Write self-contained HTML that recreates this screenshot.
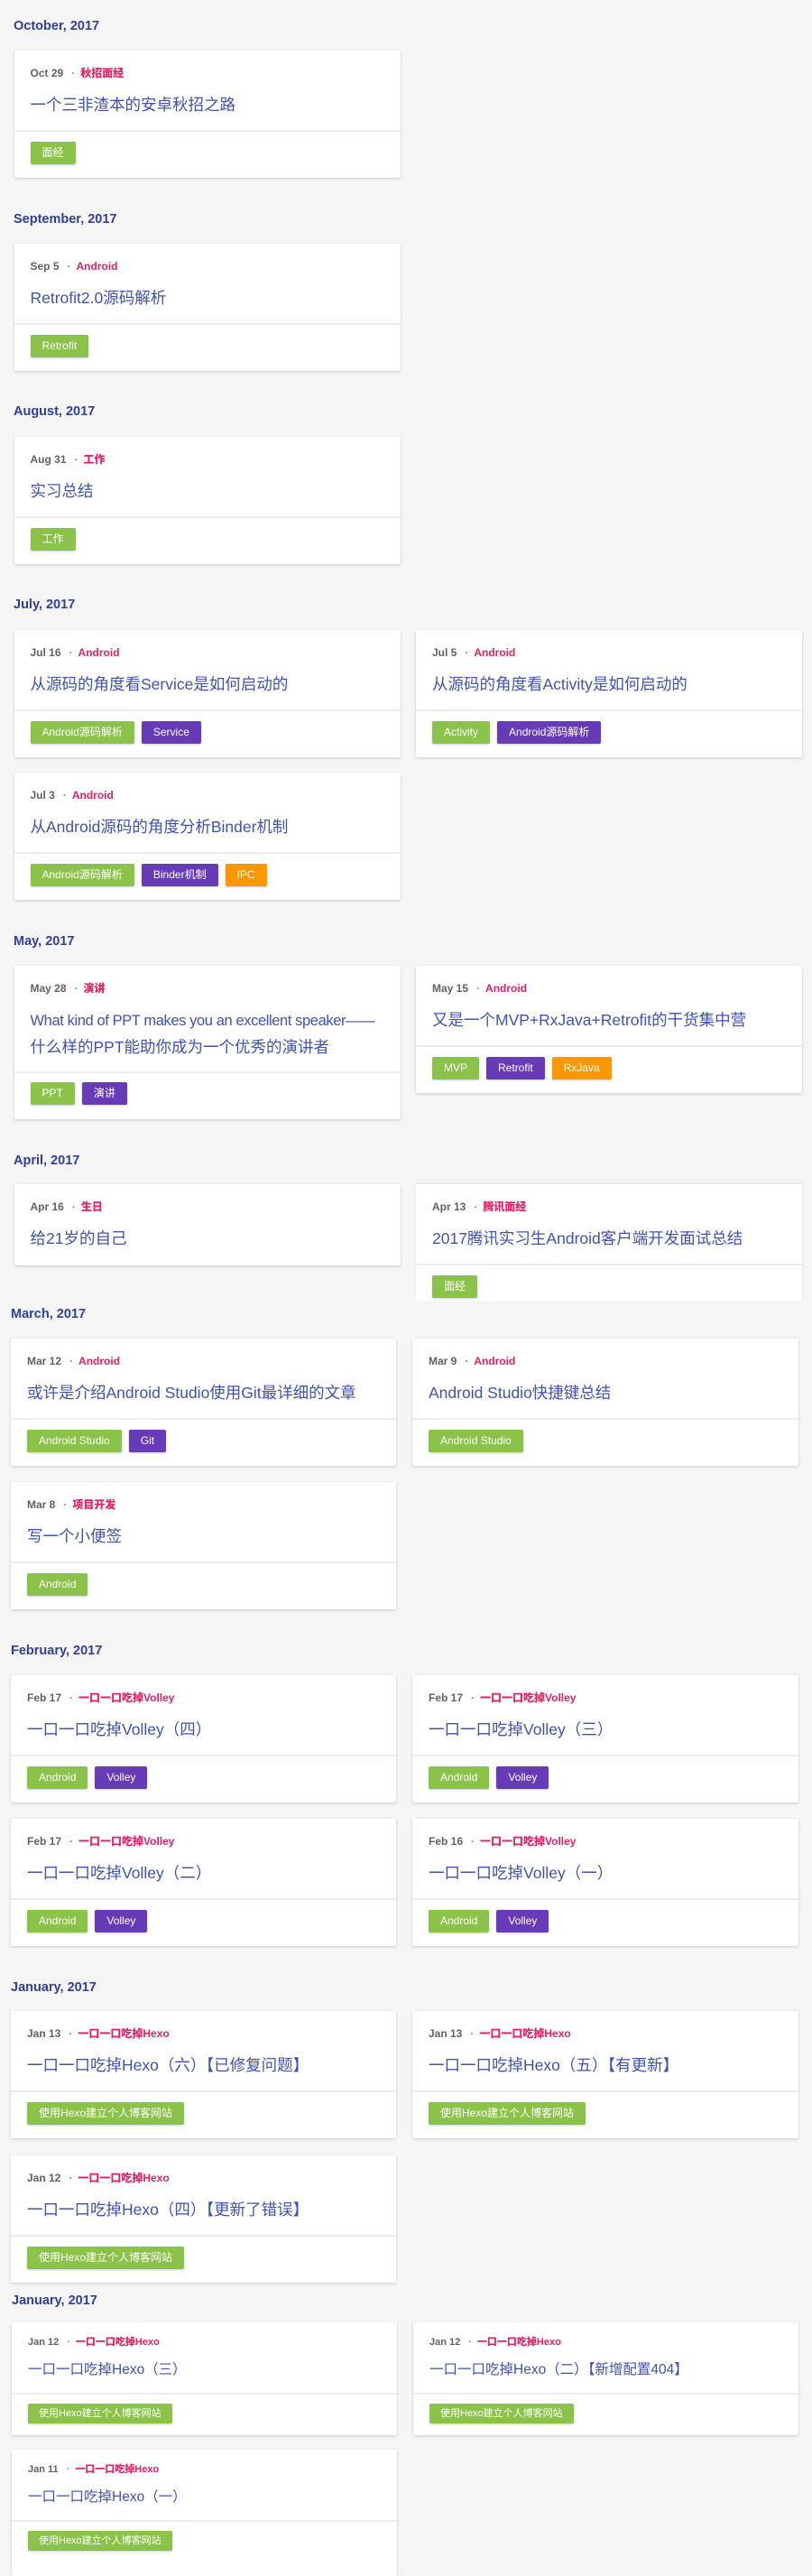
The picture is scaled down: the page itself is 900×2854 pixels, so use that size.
<!DOCTYPE html>
<html><head><meta charset="utf-8"><style>
*{margin:0;padding:0;box-sizing:border-box}
body{width:900px;height:2835px;background:#f5f5f5;position:relative;overflow:hidden;font-family:"Liberation Sans","Noto Sans CJK SC",sans-serif}
.h{position:absolute;font-size:14.5px;font-weight:bold;color:#303f9f;line-height:20px;white-space:nowrap}
.c{position:absolute;width:428px;height:141px;background:#fff;border-radius:2px;box-shadow:0 1px 3px rgba(0,0,0,.18);overflow:hidden}
.m{position:absolute;left:18px;top:17px;line-height:16px;font-size:12px;font-weight:bold;color:#616161;white-space:nowrap}
.m b{color:#e91e63}
.m i{font-style:normal;color:#888;margin:0 6px 0 9px}
.t{position:absolute;left:18px;top:46px;right:10px;font-size:17.5px;line-height:29px;color:#3f51b5;white-space:nowrap}
.d{position:absolute;left:0;right:0;top:88px;height:2px;background:#ececec}
.g{position:absolute;left:18px;top:101px;white-space:nowrap;font-size:0}
.g span{display:inline-block;height:25px;line-height:25px;padding:0 13px;margin-right:8px;font-size:12px;color:#fff;border-radius:2px;box-shadow:0 1px 2px rgba(0,0,0,.2)}
.G{background:#8bc34a}.P{background:#673ab7}.O{background:#ff9800}
.s{height:125px}
.s .m{top:15px;font-size:11px;line-height:14px}
.s .t{top:40px;font-size:15.5px;line-height:26px}
.s .d{top:78px}
.s .g{top:90px}
.s .g span{height:22px;line-height:22px;font-size:11px;padding:0 12px}
</style></head><body>

<div class="h" style="left:15px;top:19px">October, 2017</div>
<div class="c" style="left:15.5px;top:56px"><div class="m">Oct 29<i>·</i><b>秋招面经</b></div><div class="t">一个三非渣本的安卓秋招之路</div><div class="d"></div><div class="g"><span class="G">面经</span></div></div>

<div class="h" style="left:15px;top:233px">September, 2017</div>
<div class="c" style="left:15.5px;top:270px"><div class="m">Sep 5<i>·</i><b>Android</b></div><div class="t">Retrofit2.0源码解析</div><div class="d"></div><div class="g"><span class="G">Retrofit</span></div></div>

<div class="h" style="left:15px;top:446px">August, 2017</div>
<div class="c" style="left:15.5px;top:484px"><div class="m">Aug 31<i>·</i><b>工作</b></div><div class="t">实习总结</div><div class="d"></div><div class="g"><span class="G">工作</span></div></div>

<div class="h" style="left:15px;top:660px">July, 2017</div>
<div class="c" style="left:15.5px;top:698px"><div class="m">Jul 16<i>·</i><b>Android</b></div><div class="t">从源码的角度看Service是如何启动的</div><div class="d"></div><div class="g"><span class="G">Android源码解析</span><span class="P">Service</span></div></div>
<div class="c" style="left:461px;top:698px"><div class="m">Jul 5<i>·</i><b>Android</b></div><div class="t">从源码的角度看Activity是如何启动的</div><div class="d"></div><div class="g"><span class="G">Activity</span><span class="P">Android源码解析</span></div></div>
<div class="c" style="left:15.5px;top:856px"><div class="m">Jul 3<i>·</i><b>Android</b></div><div class="t">从Android源码的角度分析Binder机制</div><div class="d"></div><div class="g"><span class="G">Android源码解析</span><span class="P">Binder机制</span><span class="O">IPC</span></div></div>

<div class="h" style="left:15px;top:1033px">May, 2017</div>
<div class="c" style="left:15.5px;top:1070px;height:170px"><div class="m">May 28<i>·</i><b>演讲</b></div><div class="t"><span style="font-size:16.5px;letter-spacing:-0.4px">What kind of PPT makes you an excellent speaker——</span><br>什么样的PPT能助你成为一个优秀的演讲者</div><div class="d" style="top:117px"></div><div class="g" style="top:129px"><span class="G">PPT</span><span class="P">演讲</span></div></div>
<div class="c" style="left:461px;top:1070px"><div class="m">May 15<i>·</i><b>Android</b></div><div class="t">又是一个MVP+RxJava+Retrofit的干货集中营</div><div class="d"></div><div class="g"><span class="G">MVP</span><span class="P">Retrofit</span><span class="O">RxJava</span></div></div>

<div class="h" style="left:15px;top:1276px">April, 2017</div>
<div class="c" style="left:15.5px;top:1312px;height:90px"><div class="m">Apr 16<i>·</i><b>生日</b></div><div class="t">给21岁的自己</div></div>
<div class="c" style="left:461px;top:1312px;height:129px;box-shadow:0 -1px 2px rgba(0,0,0,.1)"><div class="m">Apr 13<i>·</i><b>腾讯面经</b></div><div class="t">2017腾讯实习生Android客户端开发面试总结</div><div class="d"></div><div class="g"><span class="G">面经</span></div></div>

<div class="h" style="left:12px;top:1446px">March, 2017</div>
<div class="c" style="left:12px;top:1483px;width:427px"><div class="m">Mar 12<i>·</i><b>Android</b></div><div class="t">或许是介绍Android Studio使用Git最详细的文章</div><div class="d"></div><div class="g"><span class="G">Android Studio</span><span class="P">Git</span></div></div>
<div class="c" style="left:457px;top:1483px;width:428px"><div class="m">Mar 9<i>·</i><b>Android</b></div><div class="t">Android Studio快捷键总结</div><div class="d"></div><div class="g"><span class="G">Android Studio</span></div></div>
<div class="c" style="left:12px;top:1642px;width:427px"><div class="m">Mar 8<i>·</i><b>项目开发</b></div><div class="t">写一个小便签</div><div class="d"></div><div class="g"><span class="G">Android</span></div></div>

<div class="h" style="left:12px;top:1819px">February, 2017</div>
<div class="c" style="left:12px;top:1856px;width:427px"><div class="m">Feb 17<i>·</i><b>一口一口吃掉Volley</b></div><div class="t">一口一口吃掉Volley（四）</div><div class="d"></div><div class="g"><span class="G">Android</span><span class="P">Volley</span></div></div>
<div class="c" style="left:457px;top:1856px;width:428px"><div class="m">Feb 17<i>·</i><b>一口一口吃掉Volley</b></div><div class="t">一口一口吃掉Volley（三）</div><div class="d"></div><div class="g"><span class="G">Android</span><span class="P">Volley</span></div></div>
<div class="c" style="left:12px;top:2015px;width:427px"><div class="m">Feb 17<i>·</i><b>一口一口吃掉Volley</b></div><div class="t">一口一口吃掉Volley（二）</div><div class="d"></div><div class="g"><span class="G">Android</span><span class="P">Volley</span></div></div>
<div class="c" style="left:457px;top:2015px;width:428px"><div class="m">Feb 16<i>·</i><b>一口一口吃掉Volley</b></div><div class="t">一口一口吃掉Volley（一）</div><div class="d"></div><div class="g"><span class="G">Android</span><span class="P">Volley</span></div></div>

<div class="h" style="left:12px;top:2192px">January, 2017</div>
<div class="c" style="left:12px;top:2228px;width:427px"><div class="m">Jan 13<i>·</i><b>一口一口吃掉Hexo</b></div><div class="t">一口一口吃掉Hexo（六）【已修复问题】</div><div class="d"></div><div class="g"><span class="G">使用Hexo建立个人博客网站</span></div></div>
<div class="c" style="left:457px;top:2228px;width:428px"><div class="m">Jan 13<i>·</i><b>一口一口吃掉Hexo</b></div><div class="t">一口一口吃掉Hexo（五）【有更新】</div><div class="d"></div><div class="g"><span class="G">使用Hexo建立个人博客网站</span></div></div>
<div class="c" style="left:12px;top:2388px;width:427px"><div class="m">Jan 12<i>·</i><b>一口一口吃掉Hexo</b></div><div class="t">一口一口吃掉Hexo（四）【更新了错误】</div><div class="d"></div><div class="g"><span class="G">使用Hexo建立个人博客网站</span></div></div>

<div class="h" style="left:13px;top:2539px">January, 2017</div>
<div class="c s" style="left:13px;top:2573px;width:427px"><div class="m">Jan 12<i>·</i><b>一口一口吃掉Hexo</b></div><div class="t">一口一口吃掉Hexo（三）</div><div class="d"></div><div class="g"><span class="G">使用Hexo建立个人博客网站</span></div></div>
<div class="c s" style="left:458px;top:2573px;width:427px"><div class="m">Jan 12<i>·</i><b>一口一口吃掉Hexo</b></div><div class="t">一口一口吃掉Hexo（二）【新增配置404】</div><div class="d"></div><div class="g"><span class="G">使用Hexo建立个人博客网站</span></div></div>
<div class="c s" style="left:13px;top:2714px;width:427px;height:140px"><div class="m">Jan 11<i>·</i><b>一口一口吃掉Hexo</b></div><div class="t">一口一口吃掉Hexo（一）</div><div class="d"></div><div class="g"><span class="G">使用Hexo建立个人博客网站</span></div></div>

</body></html>
